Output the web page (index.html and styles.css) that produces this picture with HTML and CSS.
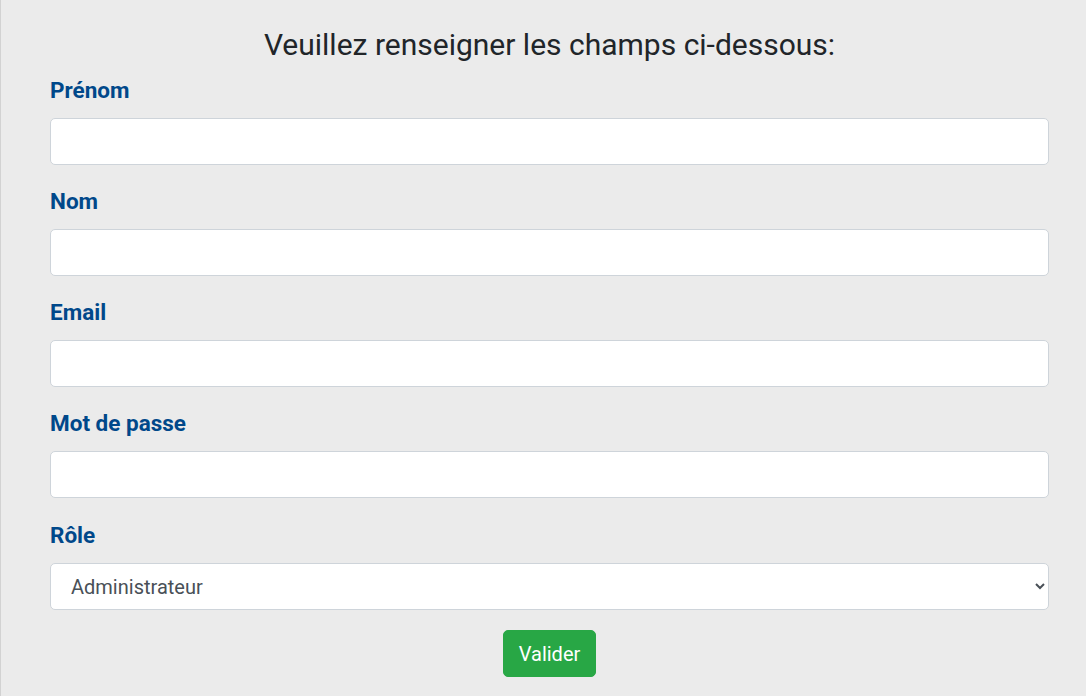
FILE: index.html
```html
<!DOCTYPE html>
<html lang="fr">
<head>
<meta charset="utf-8">
<title>Formulaire</title>
<link rel="stylesheet" href="styles.css">
</head>
<body>
<div class="page">
  <form class="form">
    <h2 class="title">Veuillez renseigner les champs ci-dessous:</h2>
    <div class="group">
      <label class="label" for="prenom">Prénom</label>
      <input class="control" id="prenom" type="text">
    </div>
    <div class="group">
      <label class="label" for="nom">Nom</label>
      <input class="control" id="nom" type="text">
    </div>
    <div class="group">
      <label class="label" for="email">Email</label>
      <input class="control" id="email" type="email">
    </div>
    <div class="group">
      <label class="label" for="mdp">Mot de passe</label>
      <input class="control" id="mdp" type="password">
    </div>
    <div class="group group-select">
      <label class="label" for="role">Rôle</label>
      <select class="control select" id="role">
        <option>Administrateur</option>
        <option>Utilisateur</option>
      </select>
    </div>
    <div class="actions">
      <button class="btn" type="button">Valider</button>
    </div>
  </form>
</div>
</body>
</html>
```
FILE: styles.css
```css
html, body {
  margin: 0;
  padding: 0;
  background: #ebebeb;
  font-family: Roboto, "Liberation Sans", sans-serif;
}
.page {
  border-left: 1px solid #d2d2d2;
  min-height: 696px;
  box-sizing: border-box;
  padding-left: 49px;
}
.form {
  width: 999px;
  display: flex;
  flex-direction: column;
}
.title {
  margin: 26px 0 0 0;
  font-size: 30px;
  font-weight: 400;
  line-height: 38px;
  color: #212529;
  text-align: center;
}
.group {
  display: flex;
  flex-direction: column;
}
.label {
  margin-top: 11px;
  font-size: 22.5px;
  font-weight: 700;
  line-height: 30px;
  color: #00488a;
  margin-bottom: 13px;
}
.group:not(:first-of-type) .label { margin-top: 21px; }
.group.group-select .label { margin-top: 22px; }
.control {
  box-sizing: border-box;
  height: 47px;
  width: 100%;
  margin: 0;
  padding: 8px 16px;
  font-family: Roboto, "Liberation Sans", sans-serif;
  font-size: 20px;
  color: #495057;
  background: #ffffff;
  border: 1px solid #ced4da;
  border-radius: 5px;
  outline: none;
}
.actions {
  display: flex;
  justify-content: center;
  margin-top: 20px;
}
.btn {
  height: 47px;
  padding: 0 15px;
  font-family: Roboto, "Liberation Sans", sans-serif;
  font-size: 20px;
  color: #ffffff;
  background: #28a745;
  border: 1px solid #28a745;
  border-radius: 5px;
  cursor: pointer;
}
```
